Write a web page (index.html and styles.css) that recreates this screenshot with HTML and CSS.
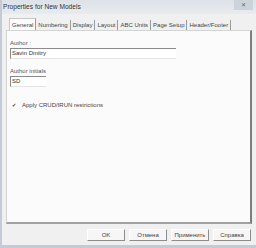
FILE: index.html
```html
<html lang="en">
    <head>
        <meta charset="UTF-8">
        <title>Properties for New Models</title>
        <link rel="stylesheet" href="styles.css">
    </head>
    <body>
        <div class="window">
            <!--title bar-->
            <div class="titlebar">
                <span class="title">Properties for New Models</span>
                <span class="close">&#x2715;</span>
            </div>

            <div class="dialog">
                <!--tab strip-->
                <div class="tabs">
                    <div class="tab active">General</div>
                    <div class="tab">Numbering</div>
                    <div class="tab">Display</div>
                    <div class="tab">Layout</div>
                    <div class="tab">ABC Units</div>
                    <div class="tab">Page Setup</div>
                    <div class="tab">Header/Footer</div>
                </div>

                <!--general page-->
                <div class="panel">
                    <label class="field-label">Author :</label>
                    <div class="textbox wide">Savin Dmitry</div>

                    <label class="field-label">Author initials</label>
                    <div class="textbox narrow">SD</div>

                    <div class="check-row">
                        <span class="checkbox">&#x2714;</span>
                        <span>Apply CRUD/IRUN restrictions</span>
                    </div>
                </div>

                <!--dialog buttons-->
                <div class="buttons">
                    <button>OK</button>
                    <button>Отмена</button>
                    <button>Применить</button>
                    <button>Справка</button>
                </div>
            </div>
        </div>
    </body>
</html>
```

FILE: styles.css
```css
body {
    margin: 0;
    padding: 0;
    width: 256px;
    height: 248px;
    background-color: #c3cbd6; /*window frame*/
    font-family: 'Liberation Sans', Arial, sans-serif;
    overflow: hidden;
}

.window {
    margin-left: 2px;
    width: 254px;
    height: 245px;
    background-color: #f0f0f0;
    display: flex;
    flex-direction: column;
}

.titlebar {
    height: 14px;
    display: flex;
    align-items: flex-start;
    justify-content: space-between;
    background: linear-gradient(#dde2e9, #e8ebef);
}

.title {
    font-size: 6.6px;
    color: #333;
    margin-top: 3px;
    margin-left: 1px;
}

.close {
    width: 19px;
    height: 10px;
    margin-right: 3px;
    background-color: #cdd3db;
    color: #666;
    font-size: 6px;
    text-align: center;
    line-height: 10px;
}

.dialog {
    flex-grow: 1;
    display: flex;
    flex-direction: column;
    padding: 3px 4px 4px 4px;
}

.tabs {
    display: flex;
    height: 13px;
    padding-left: 3px;
    align-items: flex-end;
}

.tab {
    font-size: 6px;
    color: #444;
    height: 10px;
    line-height: 10px;
    padding: 0 2px 0 2px;
    border-right: 1px solid #9a9a9a;
}

.tab.active {
    background-color: #fbfbfb;
    height: 12px;
    line-height: 12px;
    border-top: 1px solid #c8c8c8;
    border-left: 1px solid #c8c8c8;
    padding: 0 2px;
    margin-bottom: -1px; /*merge with page*/
}

.panel {
    flex-grow: 1;
    background-color: #fbfbfb;
    border: 1px solid #d4d4d4;
    border-right: 2px solid #7d7d7d;
    border-bottom: 2px solid #a0a0a0;
    padding: 9px 0 0 3px;
    display: flex;
    flex-direction: column;
    align-items: flex-start;
}

.field-label {
    font-size: 6px;
    color: #555;
    margin-bottom: 2px;
}

.textbox {
    font-size: 6px;
    color: #333;
    height: 9px;
    line-height: 9px;
    padding-left: 1px;
    background-color: #fff;
    border-top: 1px solid #8a8a8a;
    border-left: 1px solid #8a8a8a;
    border-bottom: 1px solid #e4e4e4;
    margin-bottom: 9px;
}

.textbox.wide {
    width: 164px;
}

.textbox.narrow {
    width: 34px;
}

.check-row {
    display: flex;
    align-items: center;
    font-size: 6px;
    color: #444;
    margin-top: 6px;
    margin-left: 2px;
}

.checkbox {
    width: 5px;
    height: 5px;
    font-size: 5px;
    line-height: 5px;
    margin-right: 5px;
    color: #333;
}

.buttons {
    display: flex;
    justify-content: flex-end;
    gap: 4px;
    padding: 5px 1px 0 0;
}

button {
    width: 38px;
    height: 12px;
    padding: 0;
    font-family: 'Liberation Sans', Arial, sans-serif;
    font-size: 6px;
    color: #444;
    background-color: #f6f6f6;
    border: 1px solid #fff;
    border-right: 1px solid #8c8c8c;
    border-bottom: 1px solid #8c8c8c;
}
```
